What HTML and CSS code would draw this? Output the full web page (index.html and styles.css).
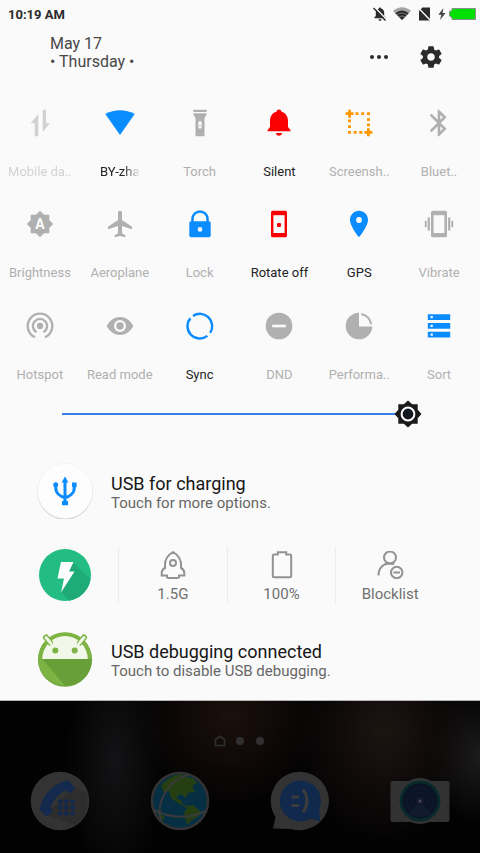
FILE: index.html
```html
<!DOCTYPE html>
<html lang="en">
<head>
<meta charset="utf-8">
<meta name="viewport" content="width=device-width, initial-scale=1">
<title>Quick settings</title>
<link rel="stylesheet" href="styles.css">
</head>
<body>
<main class="shade">
  <div class="status">
    <span class="clock">10:19 AM</span>
    <div class="status-icons">
      <svg width="14" height="14" viewBox="0 0 14 14"><path fill="#2b2b2b" d="M7 .5c.7 0 1 .5 1 1 2 .5 3.200 2 3.200 4.200v3.300l1.500 1.500v.8H1.300v-.8L2.800 9V5.700C2.800 3.500 4 2 6 1.500c0-.5.300-1 1-1zM5.500 12.200h3c0 1-.7 1.500-1.500 1.500s-1.500-.5-1.500-1.500z"/><path stroke="#fafafa" stroke-width="1.500" d="M1.500 0l12 12.500"/><path stroke="#2b2b2b" stroke-width="1.400" d="M.5 1l12 12.500"/></svg>
      <svg width="18" height="14" viewBox="0 0 18 14"><path fill="#a3a3a3" d="M0 4Q9-3.500 18 4L9 13z"/><path fill="#2b2b2b" d="M2.300 6.300Q9 .8 15.700 6.300L9 13z"/><path fill="none" stroke="#8a8a8a" stroke-width=".8" d="M4 8Q9 4 14 8M6 10Q9 7.800 12 10"/></svg>
      <svg class="sim" width="13" height="14" viewBox="0 0 13 14"><path fill="#2b2b2b" d="M4.500.5H12V13.500H1V4z"/><path stroke="#fafafa" stroke-width="1.400" d="M.5 1l12 12.500"/></svg>
      <svg width="8" height="12" viewBox="0 0 8 12"><path fill="#444" d="M5.500 0L.3 6.800h3L2 12l5.500-7H4.500z"/></svg>
      <svg width="27" height="12" viewBox="0 0 27 12"><path fill="#00e000" stroke="#8c8c8c" d="M3 .5H26.500V11.500H3V9.500L.5 8V3.500L3 2.500z"/></svg>
    </div>
  </div>

  <header class="header">
    <div class="date"><div>May 17</div><div>• Thursday •</div></div>
    <button class="icon-btn" aria-label="More"><svg width="26" height="26" viewBox="-13 -13 26 26" fill="#2b2b2b"><circle cx="-7" r="2"/><circle r="2"/><circle cx="7" r="2"/></svg></button>
    <button class="icon-btn" aria-label="Settings"><svg width="26" height="26" viewBox="0 0 24 24" fill="#2b2b2b"><path d="M19.430 12.980c.04-.32.070-.64.070-.98s-.03-.66-.07-.98l2.110-1.650c.19-.15.240-.42.120-.64l-2-3.460c-.12-.22-.39-.3-.61-.22l-2.490 1c-.52-.4-1.080-.73-1.690-.98l-.38-2.650C14.460 2.180 14.250 2 14 2h-4c-.25 0-.46.180-.49.420l-.38 2.650c-.61.250-1.170.590-1.690.98l-2.490-1c-.23-.09-.49 0-.61.220l-2 3.460c-.13.220-.07.490.12.640l2.110 1.650c-.04.320-.07.650-.07.980s.030.660.070.980l-2.110 1.650c-.19.150-.24.420-.12.640l2 3.460c.12.220.390.300.610.220l2.490-1c.52.400 1.080.730 1.690.980l.38 2.650c.030.240.240.420.490.420h4c.25 0 .46-.18.490-.42l.38-2.650c.61-.25 1.170-.59 1.690-.98l2.490 1c.23.090.49 0 .61-.22l2-3.460c.12-.22.070-.49-.12-.64l-2.110-1.650zM12 15.500c-1.930 0-3.500-1.570-3.500-3.500s1.570-3.500 3.500-3.500 3.500 1.570 3.500 3.500-1.570 3.500-3.500 3.500z"/></svg></button>
  </header>

  <section class="tiles" aria-label="Quick toggles">
    <button class="tile disabled">
      <svg class="glyph" viewBox="-16 -16 32 32"><path d="M-1.700-9L-9.300.3H-5.300V13.300H-1.700zM2.700-13.300H6V.3H9.800L2.700 9z"/></svg>
      <span class="label">Mobile da..</span></button>
    <button class="tile on">
      <svg class="glyph blue" viewBox="-16 -16 32 32"><path d="M-14.700-9Q0-16.500 14.700-9L0 12z"/></svg>
      <span class="label fade">BY-zha</span></button>
    <button class="tile">
      <svg class="glyph" viewBox="-16 -16 32 32"><path fill-rule="evenodd" d="M-6.700-13.300H6.700V-11H-6.700zM-6.700-9.700H6.700V-8.500L4.500-5V13.300H-4.500V-5L-6.700-8.500zM0-2A1.700 1.700 0 0 0-1.700-.3V4A1.700 1.700 0 0 0 1.700 4V-.3A1.700 1.700 0 0 0 0-2z"/><circle cy="2.500" r=".8"/></svg>
      <span class="label">Torch</span></button>
    <button class="tile on">
      <svg class="glyph red" viewBox="-16 -16 32 32"><path d="M0-13.500C1.500-13.500 2.300-12.600 2.500-11.300C7-10 9-6.500 9-2V4L11.400 7V8.200H-11.400V7L-9 4V-2C-9-6.500-7-10-2.500-11.300C-2.300-12.600-1.500-13.500 0-13.500zM-3.200 10H3.200C2.800 11.800 1.500 12.800 0 12.800S-2.800 11.800-3.200 10z"/></svg>
      <span class="label">Silent</span></button>
    <button class="tile">
      <svg class="glyph orange" viewBox="-16 -16 32 32"><path d="M-10.800-13.300h2.800v2.600h2.600v2.800h-2.600v2.600h-2.800v-2.600h-2.600v-2.800h2.600zM8 5.300h2.800v2.600h2.600v2.800h-2.600v2.600H8v-2.600H5.400V7.900H8zM-3.500-10.700h3v2.800h-3zM2.200-10.700h3v2.800h-3zM8-10.700h3v2.800H8zM8-4.800h3V-2H8zM8 .5h3v2.800H8zM-11-3.500h3V-.7h-3zM-11 2.200h3V5h-3zM-11 7.900h3v2.800h-3zM-5.300 7.900h3v2.800h-3zM.3 7.900h3v2.800h-3z"/></svg>
      <span class="label">Screensh..</span></button>
    <button class="tile">
      <svg class="glyph" viewBox="0 0 24 24"><path d="M17.710 7.710L12 2h-1v7.590L6.410 5 5 6.410 10.590 12 5 17.590 6.410 19 11 14.410V22h1l5.710-5.710-4.300-4.290 4.300-4.290zM13 5.830l1.880 1.880L13 9.590V5.830zm1.880 10.460L13 18.170v-3.760l1.880 1.880z"/></svg>
      <span class="label">Bluet..</span></button>

    <button class="tile">
      <svg class="glyph" viewBox="-16 -16 32 32"><path d="M0-13.200L4-9.300H9.300V-4L13.200 0 9.300 4V9.300H4L0 13.200-4 9.300H-9.300V4L-13.200 0-9.300-4V-9.300H-4z"/><text class="glyph-letter" y="5" text-anchor="middle">A</text></svg>
      <span class="label">Brightness</span></button>
    <button class="tile">
      <svg class="glyph" viewBox="-.5 0 24 24"><path d="M20.500 16v-2l-7.500-5V3.500c0-.83-.67-1.500-1.500-1.500S10 2.670 10 3.500V9l-7.500 5v2l7.500-2.500V19l-2.500 1.500V22l4-1 4 1v-1.500L13 19v-5.500l7.500 2.500z"/></svg>
      <span class="label">Aeroplane</span></button>
    <button class="tile">
      <svg class="glyph blue" viewBox="-16 -16 32 32"><path fill="none" stroke="#0a8cff" stroke-width="2.500" d="M-7.500-2V-5a7.500 7.500 0 0 1 15 0V-2"/><rect x="-10.700" y="-2.700" width="21.400" height="16" rx="1.800"/><circle class="hole" cy="5.400" r="2.300"/></svg>
      <span class="label">Lock</span></button>
    <button class="tile on">
      <svg class="glyph red" viewBox="-16 -16 32 32"><rect x="-8" y="-13.300" width="16" height="26.600" rx="1.500"/><path class="hole" d="M-5.600-8.800H5.600V9H-5.600z"/><rect x="-2" y="-1" width="4" height="4" rx="1"/></svg>
      <span class="label">Rotate off</span></button>
    <button class="tile on">
      <svg class="glyph blue" viewBox="-16 -16 32 32"><path fill-rule="evenodd" d="M0-13.300C-5-13.300-9-9.300-9-4.300C-9 2.500 0 13.300 0 13.300S9 2.500 9-4.300C9-9.300 5-13.300 0-13.300zM0-6.900a2.900 2.900 0 1 1 0 5.800a2.900 2.900 0 1 1 0-5.800z"/></svg>
      <span class="label">GPS</span></button>
    <button class="tile">
      <svg class="glyph" viewBox="-16 -16 32 32"><rect x="-8" y="-13.300" width="16" height="26.600" rx="1.500"/><path class="hole" d="M-5.400-8.800H5.400V9H-5.400z"/><path d="M-11.300-6.500h2.200V6.500h-2.200zM-14.200-3.200h1.900V3.200h-1.900zM9.100-6.500h2.200V6.500H9.100zM12.300-3.200h1.900V3.200h-1.900z"/></svg>
      <span class="label">Vibrate</span></button>

    <button class="tile">
      <svg class="glyph line" viewBox="-16 -16 32 32"><path d="M-5 11.200A12.300 12.300 0 1 1 5 11.200M-3.500 6.200A7.100 7.100 0 1 1 3.500 6.200"/><circle class="dot" r="3.200"/></svg>
      <span class="label">Hotspot</span></button>
    <button class="tile">
      <svg class="glyph" viewBox="-16 -16 32 32"><path d="M-13.300 0C-7-12 7-12 13.300 0C7 12-7 12-13.300 0z"/><circle class="hole" r="6"/><circle r="3.700"/></svg>
      <span class="label">Read mode</span></button>
    <button class="tile on">
      <svg class="glyph line sync" viewBox="-16 -16 32 32"><path d="M-7-10.100A12.300 12.300 0 0 1 10.200 6.800M7.400 9.900A12.300 12.300 0 0 1-9.600-7.700"/></svg>
      <span class="label">Sync</span></button>
    <button class="tile">
      <svg class="glyph" viewBox="-16 -16 32 32"><circle r="13.300"/><path class="hole" d="M-6.800-1.300H6.800V1.300H-6.800z"/></svg>
      <span class="label">DND</span></button>
    <button class="tile">
      <svg class="glyph" viewBox="-16 -16 32 32"><path d="M0-13.300A13.300 13.300 0 1 0 13.300.5H0zM2.200-13.100A13.300 13.300 0 0 1 13.200-1.700H11A11 11 0 0 0 2.200-10.700z"/></svg>
      <span class="label">Performa..</span></button>
    <button class="tile">
      <svg class="glyph blue" viewBox="-16 -16 32 32"><path d="M-11.200-11.800H11.200V-6H-11.200zM-11.200-3H11.200V2.800H-11.200zM-11.200 5.700H11.200V11.500H-11.200z"/><path class="hole" d="M-8.400-9.900h2.200v2.200h-2.200zM-8.400-1.200h2.200V1h-2.200zM-8.400 7.500h2.200v2.200h-2.200z"/></svg>
      <span class="label">Sort</span></button>
  </section>

  <div class="slider">
    <input type="range" min="0" max="100" value="100" aria-label="Screen brightness">
    <svg class="thumb" width="28" height="28" viewBox="-14 -14 28 28"><path fill="#1a1a1a" d="M0-13.500L4.200-9.700H9.700V-4.200L13.500 0 9.700 4.200V9.700H4.200L0 13.500-4.200 9.700H-9.700V4.200L-13.500 0-9.700-4.200V-9.700H-4.200z"/><circle r="6.400" fill="#111820" stroke="#fff" stroke-width="2"/></svg>
  </div>

  <section class="notes" aria-label="Notifications">
    <article class="note">
      <svg class="badge" viewBox="-28 -28 56 56"><circle cy="1" r="27.600" fill="#d2d2d2"/><circle r="27.700" fill="#ececec"/><circle r="27.200" fill="#fdfdfd"/><g fill="#0a8cff"><path d="M0-14.500L3.400-8.500H-3.400zM-3 10H3V14.300H-3z"/><circle cx="-9.300" cy="-6.200" r="2.500"/><path d="M7-8.500h4.600v4.600H7z"/></g><path fill="none" stroke="#0a8cff" stroke-width="3" d="M0-10V12M-9.300-6V-3.500C-9.300 2-5 5.500 0 6.500C5 5.500 9.300 2 9.300-3.500V-6"/></svg>
      <div class="text"><h2>USB for charging</h2><p>Touch for more options.</p></div>
    </article>

    <article class="note">
      <svg class="badge" viewBox="-28 -28 56 56"><circle r="26" fill="#23bd83"/><path fill="#1eab78" d="M8-13L25.500 4A26 26 0 0 1 4 25.700L-4 17z"/><path fill="#fff" d="M-4-13H8.500L4-3.500H9.500L-4 17.500L-1 3.500H-7.500z"/></svg>
      <div class="stats">
        <button class="stat"><svg width="28" height="28" viewBox="-14 -14 28 28"><path d="M0-13C5-10 8-5 8-.5V3C10 4 11.300 6 11.300 8V10.500H6V11.500Q6 13 4.500 13H-4.500Q-6 13-6 11.500V10.500H-11.300V8C-11.300 6-10 4-8 3V-.5C-8-5-5-10 0-13z"/><circle cy="-2" r="3"/></svg><span>1.5G</span></button>
        <button class="stat"><svg width="28" height="28" viewBox="-14 -14 28 28"><path d="M-8-10.500H-4.200V-12.800H4.200V-10.500H8Q9.200-10.500 9.200-9.300V11Q9.200 12.200 8 12.200H-8Q-9.200 12.200-9.200 11V-9.300Q-9.200-10.500-8-10.500z"/></svg><span>100%</span></button>
        <button class="stat"><svg width="28" height="28" viewBox="-14 -14 28 28"><circle cy="-7.500" r="6"/><path d="M-11.500 10.500C-11.500 3-7-1.500 0-1.500Q2.500-1.500 4-.5M3.500 7.500H10"/><circle cx="6.700" cy="7.500" r="5.700"/></svg><span>Blocklist</span></button>
      </div>
    </article>

    <article class="note">
      <svg class="badge" viewBox="-28 -28 56 56"><circle cy=".7" r="27" fill="#689f38"/><circle r="26.800" fill="#7cb342"/><path fill="#f1f8e9" d="M-22.700 0A22.700 23 0 0 1 22.700 0z"/><path fill="#689f38" d="M-22.700 0H26.800A26.800 26.800 0 0 1 0 26.800z"/><path stroke="#7cb342" stroke-width="6" stroke-linecap="round" d="M-19-21.500l4 5M19-21.500l-4 5"/><path stroke="#f1f8e9" stroke-width="3" stroke-linecap="round" d="M-19-21.500l5 6M19-21.500l-5 6"/><circle cx="-9.700" cy="-8.500" r="3" fill="#7cb342"/><circle cx="9.700" cy="-8.500" r="3" fill="#7cb342"/></svg>
      <div class="text"><h2>USB debugging connected</h2><p>Touch to disable USB debugging.</p></div>
    </article>
  </section>
</main>

<section class="home" aria-label="Home screen">
  <div class="pager">
    <svg width="12" height="12" viewBox="0 0 12 12"><path fill="none" stroke="#303030" stroke-width="1.600" d="M1.500 10.500V4.500L6 1.300L10.500 4.500V10.500z"/></svg>
    <span class="page-dot"></span><span class="page-dot"></span>
  </div>
  <nav class="dock">
    <a href="#phone" aria-label="Phone"><svg viewBox="-30 -30 60 60"><circle r="29.300" fill="#333"/><path fill="#2d2d2d" d="M14-15L26.500-7A29 29 0 0 1 15 24L-14 14z"/><path fill="#13294d" d="M8-20.500L14.500-14Q14-9.500 9.500-8L5-10.500Q-5-5-9.500 5.500L-7.500 9.500Q-9 14-14 15L-20.500 8.500Q-18-4-8-13Q0-19.500 8-20.500z"/><path fill="#13294d" d="M-2-1.500h4.500v4H-2zM4-1.500h4.500v4H4zM10.500-1.500H15v4h-4.500zM-2 4.500h4.500v4H-2zM4 4.500h4.500v4H4zM10.500 4.500H15v4h-4.500zM-2 10.500h4.500v4H-2zM4 10.500h4.500v4H4zM10.500 10.500H15v4h-4.500z"/></svg></a>
    <a href="#browser" aria-label="Browser"><svg viewBox="-30 -30 60 60"><circle r="28" fill="#062f44" stroke="#333" stroke-width="2.500"/><path fill="#263f12" d="M-19-15Q-12-25 0-26.500L14-22L17-18L12-15L15-9L8-8L6-3L3-6Q-4-7-3-2L1-1L3 4L9 5L13 4L20 10L19 15L12 19L7 24L4 12L7 7L-2 2L-9-3L-11-10L-16-8zM-22 12L-16 15L-16 20Z"/><path fill="none" stroke="#3a3a3a" stroke-width="2" d="M8-26C-10-22-25 0-19 20M-26 9Q0 22 26 10"/></svg></a>
    <a href="#messages" aria-label="Messages"><svg viewBox="-30 -30 60 60"><path fill="#333" d="M0-29.300A29.300 29.300 0 1 1-9 28L-27 27.500L-24.500 16A29.300 29.300 0 0 1 0-29.300z"/><path fill="#11294d" d="M0-20.500A20.500 20.500 0 0 1 19 8.500L20.500 20.500L11 17.500A20.500 20.500 0 1 1 0-20.500z"/><path fill="none" stroke="#3c3c3c" stroke-width="3" d="M-8.500-4h7.500M-8.500 4.500h7.500M3-11.500Q11 0 3 11.500"/></svg></a>
    <a href="#camera" aria-label="Camera"><svg viewBox="-30 -30 60 60"><rect x="-29.500" y="-20" width="59" height="41" rx="2" fill="#323232"/><circle r="23" fill="#333"/><circle r="20.500" fill="#082a2b"/><circle r="17.500" fill="#0b1426"/><path fill="#111b30" d="M0 0L-11 12A16.500 16.500 0 0 0 11 12z"/><g fill="none" stroke="#121b2e"><circle r="13"/><circle r="9"/></g><circle r="4" fill="#151b30"/><circle r="1.500" fill="#4a4a5a"/></svg></a>
  </nav>
</section>
</body>
</html>
```
FILE: styles.css
```css
* { box-sizing: border-box; }

body {
  margin: 0;
  min-height: 100vh;
  display: flex;
  flex-direction: column;
  background: #030203;
  font-family: Roboto, "Noto Sans", sans-serif;
}

h2, p { margin: 0; font-weight: 400; }

button {
  margin: 0;
  padding: 0;
  border: 0;
  background: none;
  font: inherit;
  color: inherit;
}

svg { display: block; flex: none; }

.shade { background: #fafafa; border-bottom: 1px solid #b5b5b5; }

.status {
  display: flex;
  justify-content: space-between;
  align-items: center;
  height: 28px;
  padding: 0 4px 0 8px;
}
.clock { font-size: 13px; font-weight: 700; color: #2b2b2b; }
.status-icons { display: flex; align-items: center; gap: 3px; }
.status-icons svg:first-child { margin-right: 3px; }
.status-icons .sim { margin: 0 4px; }

.header {
  display: flex;
  align-items: center;
  gap: 26px;
  height: 58px;
  padding: 0 36px 0 50px;
}
.date { flex: 1; align-self: flex-start; padding-top: 7px; font-size: 16px; line-height: 18px; color: #484848; }

.tiles {
  display: grid;
  grid-template-columns: repeat(6, minmax(0, 1fr));
  grid-auto-rows: 1fr;
  min-height: 304px;
  padding-right: 1px;
}
.tile {
  display: flex;
  flex-direction: column;
  align-items: center;
  justify-content: flex-start;
  gap: 25px;
  padding-top: 21px;
  color: #b0b0b0;
  font-size: 13px;
  line-height: 16px;
}
.on { color: #222; }
.disabled { opacity: .55; }
.label { white-space: nowrap; }
.fade {
  -webkit-mask-image: linear-gradient(90deg, #000 60%, transparent);
  mask-image: linear-gradient(90deg, #000 60%, transparent);
}

.glyph { width: 32px; height: 32px; fill: #b0b0b0; }
.blue { fill: #0a8cff; }
.red { fill: #fa0000; }
.orange { fill: #ff9800; }
.line { fill: none; stroke: #b0b0b0; stroke-width: 2.400; }
.sync { stroke: #0a8cff; }
.hole { fill: #fafafa; }
.dot { fill: #b0b0b0; stroke: none; }
.glyph-letter { fill: #fafafa; font-size: 14px; font-weight: 700; }

.slider { position: relative; height: 28px; margin: 10px 58px 0 62px; }
.slider input {
  display: block;
  width: 100%;
  height: 28px;
  margin: 0;
  appearance: none;
  background: linear-gradient(#3a80ea, #3a80ea) left / calc(100% - 14px) 2px no-repeat;
}
.slider input::-webkit-slider-thumb { appearance: none; width: 28px; height: 28px; background: transparent; }
.thumb { position: absolute; top: 0; right: 0; pointer-events: none; }

.notes { padding-top: 21px; }
.note { display: flex; align-items: center; gap: 18px; height: 84px; padding: 0 36px 0 37px; }
.note:last-child { height: 83px; }
.badge { width: 56px; height: 56px; }
.text { padding-top: 4px; }
.text h2 { font-size: 18px; line-height: 20px; color: #161616; }
.text p { font-size: 15px; line-height: 18px; color: #666; }

.stats { flex: 1; display: flex; padding-left: 7px; }
.stat {
  flex: 1;
  display: flex;
  flex-direction: column;
  align-items: center;
  gap: 5px;
  height: 56px;
  border-left: 1px solid #ebebeb;
  padding-top: 4px;
  font-size: 15px;
  line-height: 20px;
  color: #707070;
}
.stat svg { fill: none; stroke: #929292; stroke-width: 2; }

.home {
  flex: 1;
  padding-top: 34px;
  background:
    radial-gradient(ellipse 50px 120px at 24% 40%, #131214, transparent),
    radial-gradient(ellipse 90px 90px at 48% 10%, #1b100c, transparent),
    radial-gradient(ellipse 90px 110px at 80% 20%, #1c1411, transparent),
    radial-gradient(ellipse 50px 70px at 100% 36%, #1d1c1c, transparent),
    #030203;
}
.pager { display: flex; justify-content: center; align-items: center; gap: 8px; height: 12px; }
.page-dot {
  width: 12px;
  height: 12px;
  border: 2px solid transparent;
  border-radius: 50%;
  background: #303030 padding-box;
}
.dock { display: flex; justify-content: space-around; padding-top: 24px; }
.dock svg { width: 60px; height: 60px; }
```
